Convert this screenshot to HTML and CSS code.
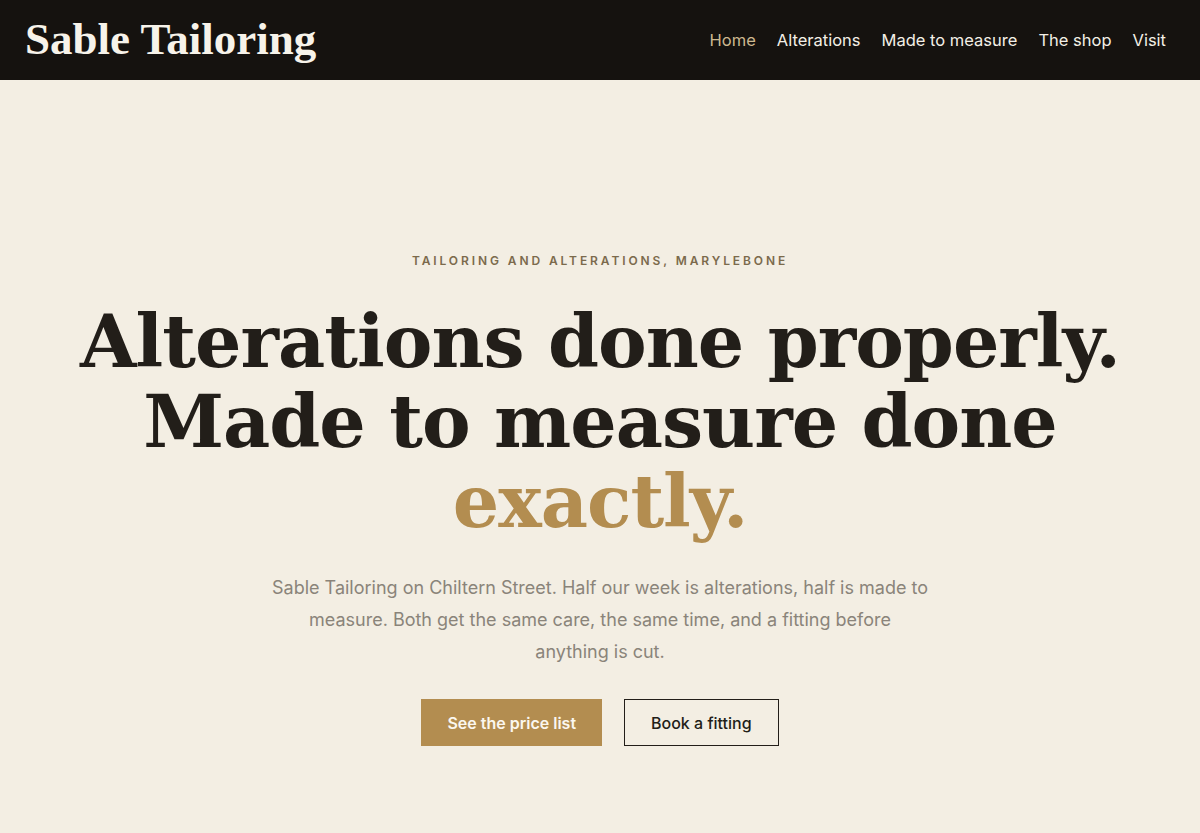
FILE: index.html
```html
<!DOCTYPE html>
<html lang="en">
<head>
<meta charset="utf-8">
<title>Sable Tailoring</title>
<link rel="stylesheet" href="styles.css">
</head>
<body>
<header class="site-header">
  <a class="logo" href="#">Sable Tailoring</a>
  <nav class="nav">
    <a class="nav-link active" href="#">Home</a>
    <a class="nav-link" href="#">Alterations</a>
    <a class="nav-link" href="#">Made to measure</a>
    <a class="nav-link" href="#">The shop</a>
    <a class="nav-link" href="#">Visit</a>
  </nav>
</header>
<main class="hero">
  <p class="eyebrow">Tailoring and alterations, Marylebone</p>
  <h1 class="headline">Alterations done properly.<br>Made to measure done<br><span class="accent">exactly.</span></h1>
  <p class="lede">Sable Tailoring on Chiltern Street. Half our week is alterations, half is made to measure. Both get the same care, the same time, and a fitting before anything is cut.</p>
  <div class="actions">
    <a class="btn btn-primary" href="#">See the price list</a>
    <a class="btn btn-outline" href="#">Book a fitting</a>
  </div>
</main>
</body>
</html>
```
FILE: styles.css
```css
* { box-sizing: border-box; }
html, body { margin: 0; padding: 0; }
body {
  background: #f3eee3;
  font-family: Inter, "Noto Sans", sans-serif;
  color: #221e19;
  min-height: 833px;
}
a { text-decoration: none; }
.site-header {
  height: 80px;
  background: #15120f;
  display: flex;
  align-items: center;
  justify-content: space-between;
  padding: 0 34px 0 25px;
}
.logo {
  font-family: "Liberation Serif", "Times New Roman", serif;
  font-weight: 700;
  font-size: 45px;
  color: #f7f3ea;
  line-height: 1;
  padding-bottom: 2px;
}
.nav { display: flex; gap: 21px; }
.nav-link {
  font-size: 16.5px;
  color: #f3efe6;
  font-weight: 400;
}
.nav-link.active { color: #cdb88f; }
.hero {
  display: flex;
  flex-direction: column;
  align-items: center;
  text-align: center;
  padding-top: 173px;
}
.eyebrow {
  margin: 0;
  font-size: 12px;
  font-weight: 600;
  letter-spacing: 2.9px;
  text-transform: uppercase;
  color: #7b6a4c;
  line-height: 16px;
}
.headline {
  margin: 32px 0 0;
  font-family: "DejaVu Serif", Georgia, serif;
  font-weight: 700;
  font-size: 73px;
  line-height: 80px;
  letter-spacing: -1px;
  color: #221e19;
}
.accent { color: #b38d50; }
.lede {
  margin: 31px 0 0;
  max-width: 658px;
  font-size: 18px;
  line-height: 32px;
  color: #8a847a;
}
.actions {
  margin-top: 31px;
  display: flex;
  gap: 22px;
}
.btn {
  display: flex;
  align-items: center;
  justify-content: center;
  height: 47px;
  padding: 0 26px;
  font-size: 16px;
  font-weight: 600;
}
.btn-primary { background: #b38d50; color: #fbf7ef; }
.btn-outline { border: 1px solid #221e19; color: #221e19; font-weight: 500; }
```
